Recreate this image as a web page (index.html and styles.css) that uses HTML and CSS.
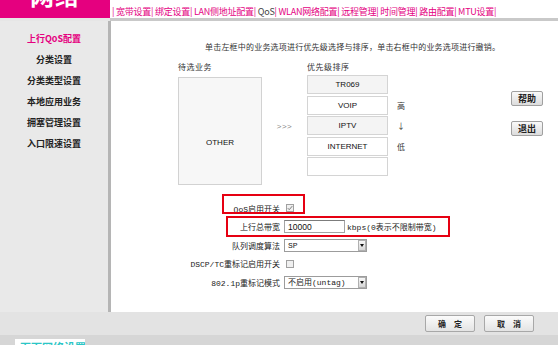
FILE: index.html
```html
<!DOCTYPE html>
<html lang="zh-CN">
<head>
<meta charset="utf-8">
<title>QoS</title>
<link rel="stylesheet" href="styles.css">
</head>
<body>
<div class="page">
  <header class="top">
    <div class="logo"><span>网络</span></div>
    <nav class="nav">| <a>宽带设置</a>| <a>绑定设置</a>| <a>LAN侧地址配置</a>| <a class="cur">QoS</a>| <a>WLAN网络配置</a>| <a>远程管理</a>| <a>时间管理</a>| <a>路由配置</a>| <a>MTU设置</a>|</nav>
  </header>
  <div class="body">
    <aside class="side">
      <ul class="menu">
        <li class="active">上行QoS配置</li>
        <li>分类设置</li>
        <li>分类类型设置</li>
        <li>本地应用业务</li>
        <li>拥塞管理设置</li>
        <li>入口限速设置</li>
      </ul>
    </aside>
    <main class="main">
      <p class="intro">单击左框中的业务选项进行优先级选择与排序，单击右框中的业务选项进行撤销。</p>
      <div class="picker">
        <div class="col-wait">
          <div class="cap">待选业务</div>
          <div class="wait-box">OTHER</div>
        </div>
        <div class="arrows">&gt;&gt;&gt;</div>
        <div class="col-prio">
          <div class="cap">优先级排序</div>
          <div class="prio-list">
            <div class="prio-row"><div class="slot alt">TR069</div></div>
            <div class="prio-row"><div class="slot">VOIP</div><span class="mark">高</span></div>
            <div class="prio-row"><div class="slot alt">IPTV</div><span class="mark">↓</span></div>
            <div class="prio-row"><div class="slot">INTERNET</div><span class="mark">低</span></div>
            <div class="prio-row"><div class="slot"></div></div>
          </div>
        </div>
        <div class="col-btn">
          <button class="btn">帮助</button>
          <button class="btn">退出</button>
        </div>
      </div>
      <div class="form">
        <div class="lbl">QoS启用开关</div>
        <div class="ctl"><span class="chk on"><svg viewBox="0 0 8 8" width="6" height="6"><path d="M1 4.2 L3 6.2 L7 1.5" fill="none" stroke="#777" stroke-width="1.3"/></svg></span></div>
        <div class="lbl">上行总带宽</div>
        <div class="ctl"><input class="txt" type="text" value="10000"><span class="unit">kbps(0表示不限制带宽)</span></div>
        <div class="lbl">队列调度算法</div>
        <div class="ctl"><div class="sel"><span>SP</span><i></i></div></div>
        <div class="lbl">DSCP/TC重标记启用开关</div>
        <div class="ctl"><span class="chk"></span></div>
        <div class="lbl">802.1p重标记模式</div>
        <div class="ctl"><div class="sel"><span>不启用(untag)</span><i></i></div></div>
        <div class="hl hl1"></div>
        <div class="hl hl2"></div>
      </div>
    </main>
  </div>
  <div class="actions">
    <button class="act">确 定</button>
    <button class="act">取 消</button>
  </div>
  <div class="foot"><span class="tab">页面网络设置</span></div>
</div>
</body>
</html>
```
FILE: styles.css
```css
* { box-sizing: border-box; margin: 0; padding: 0; }
html, body { width: 558px; height: 345px; overflow: hidden; }
body { font-family: "Noto Sans CJK SC", sans-serif; background: #fff; color: #222; }
.page { display: flex; flex-direction: column; height: 345px; }

.top { display: flex; height: 21px; flex: none; }
.logo {
  width: 110px; height: 21px; background: #e5007f;
  border-bottom: 3px solid #e6e6e6;
  display: flex; justify-content: center; align-items: flex-end; overflow: hidden;
}
.logo span { color: #fff; font-size: 24px; font-weight: bold; line-height: 24px; margin-bottom: 11px; letter-spacing: 1px; }
.nav {
  flex: 1; height: 21px; border-bottom: 3px solid #c9c9c9;
  padding: 6px 0 0 2px; font-size: 9px; line-height: 11px; letter-spacing: -0.25px;
  color: #e4007f; white-space: nowrap;
}
.nav a { color: #e4007f; }
.nav a.cur { color: #444; }

.body { display: flex; height: 291px; flex: none; }
.side { width: 111px; flex: none; background: #e9e9e9; border-right: 3px solid #b5b5b5; }
.menu { list-style: none; padding-top: 7px; }
.menu li { height: 21px; line-height: 21px; text-align: center; font-size: 9px; font-weight: bold; color: #222; }
.menu li.active { color: #e5007f; }

.main { flex: 1; padding-top: 20px; }
.intro { font-size: 8px; line-height: 12px; letter-spacing: 0.2px; padding-left: 94px; color: #333; white-space: nowrap; }

.picker { display: flex; align-items: flex-start; margin: 9px 0 0 67px; }
.cap { font-size: 8px; line-height: 10px; height: 10px; letter-spacing: 0.5px; color: #333; white-space: nowrap; }
.col-wait { width: 84px; flex: none; }
.wait-box {
  margin-top: 5px; height: 108px; background: #f7f7f7; border: 1px solid #d2d2d2;
  text-align: center; padding-top: 60px; font: 8px/10px "Liberation Sans", sans-serif; color: #111;
}
.arrows { width: 45px; flex: none; text-align: center; padding-top: 60px; font: 8px/10px "Liberation Sans", sans-serif; color: #888; letter-spacing: 0.5px; }
.col-prio { width: 100px; flex: none; }
.prio-list { margin-top: 3px; display: flex; flex-direction: column; gap: 1.5px; }
.prio-row { display: flex; align-items: center; height: 19px; }
.slot {
  width: 81px; height: 19px; border: 1px solid #d4d4d4; background: #fff;
  text-align: center; line-height: 17px; font: 8px/17px "Liberation Sans", sans-serif; color: #111;
}
.slot.alt { background: #f4f4f4; }
.mark { margin-left: 9px; font-size: 8px; color: #333; }
.col-btn { margin: 29px 0 0 104px; display: flex; flex-direction: column; gap: 15px; }
.btn {
  width: 32px; height: 15px; border: 1px solid #a0a0a0; border-radius: 2px;
  background: linear-gradient(#fafafa, #dcdcdc); font-family: inherit;
  font-size: 9px; font-weight: bold; color: #222; line-height: 13px; text-align: center;
}

.form {
  position: relative; margin-top: 14px;
  display: grid; grid-template-columns: 169px 1fr; column-gap: 4px; grid-auto-rows: 18.5px;
  align-items: center; font: 8px "Liberation Mono", "Noto Sans CJK SC", monospace; color: #222;
}
.lbl { text-align: right; white-space: nowrap; }
.ctl { display: flex; align-items: center; gap: 2px; white-space: nowrap; }
.chk {
  width: 8px; height: 8px; margin-left: 2px; border: 1px solid #a0a0a0; background: #f0f0f0;
  display: flex; align-items: center; justify-content: center;
}
.txt {
  width: 61px; height: 13px; border: 1px solid #a4a4a4; border-top-color: #7c7c7c;
  padding-left: 3px; font: 8.5px "Liberation Sans", sans-serif; color: #111; outline: none;
}
.sel { width: 83px; height: 13px; border: 1px solid #9c9c9c; display: flex; background: #fff; }
.sel span { flex: 1; padding-left: 3px; line-height: 11px; }
.sel i {
  width: 8px; border: 1px solid #b0b0b0; background: linear-gradient(#f8f8f8, #d6d6d6);
  display: flex; align-items: center; justify-content: center;
}
.sel i::after { content: ""; border-left: 2px solid transparent; border-right: 2px solid transparent; border-top: 3px solid #111; }
.hl { position: absolute; border: 2px solid #e60012; }
.hl1 { left: 111px; top: -5px; width: 83px; height: 20px; }
.hl2 { left: 115px; top: 17px; width: 224px; height: 21px; }

.actions {
  height: 23px; flex: none; background: #e3e3e3;
  display: flex; justify-content: flex-end; align-items: center; gap: 9px; padding-right: 24px;
}
.act {
  width: 50px; height: 17px; border: 1px solid #a8a8a8; border-radius: 2px;
  background: linear-gradient(#fbfbfb, #e4e4e4); font-family: inherit;
  font-size: 8px; font-weight: bold; color: #222; letter-spacing: 3px; text-indent: 3px;
}
.foot { flex: 1; background: #d6d6d6; padding: 4px 0 0 15px; overflow: hidden; }
.tab {
  display: block; width: 70px; height: 14px; background: #fff; padding: 1px 5px 0;
  color: #2cc6c6; font-size: 11px; line-height: 14px; font-weight: bold; white-space: nowrap; overflow: hidden;
}
```
